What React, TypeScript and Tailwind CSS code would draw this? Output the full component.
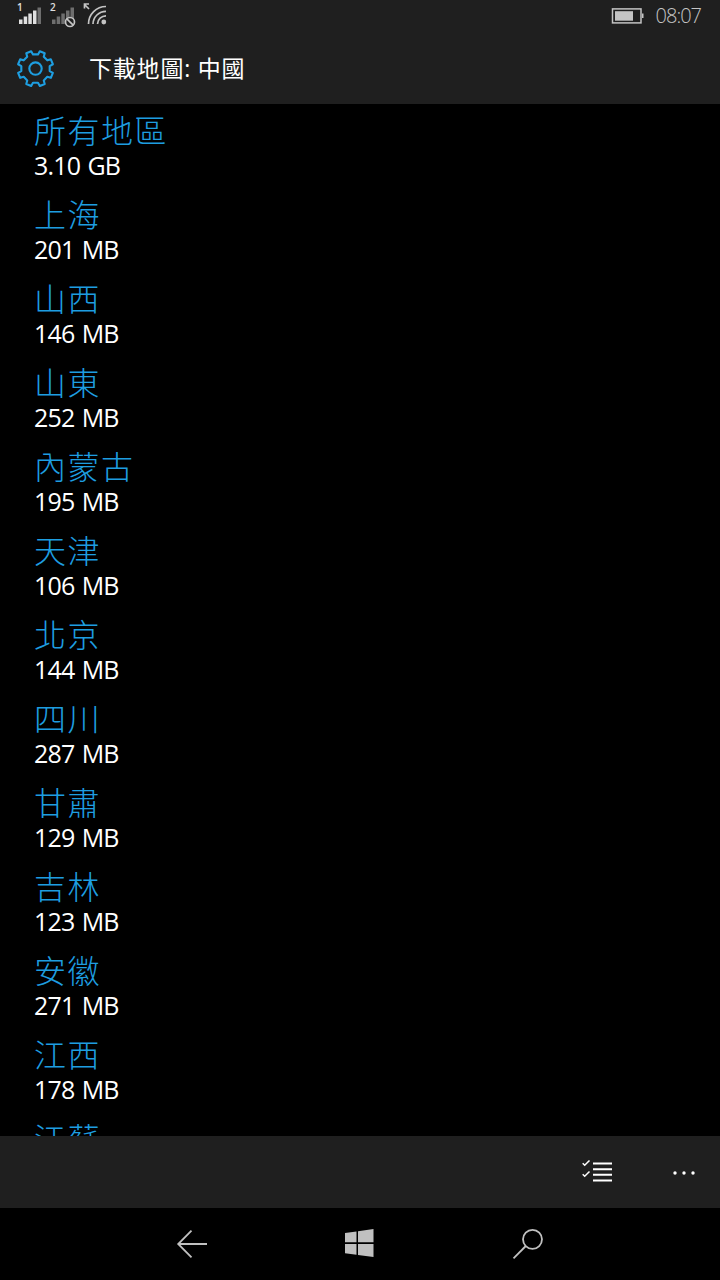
const regions = [
  { name: '所有地區', size: '3.10 GB' },
  { name: '上海', size: '201 MB' },
  { name: '山西', size: '146 MB' },
  { name: '山東', size: '252 MB' },
  { name: '內蒙古', size: '195 MB' },
  { name: '天津', size: '106 MB' },
  { name: '北京', size: '144 MB' },
  { name: '四川', size: '287 MB' },
  { name: '甘肅', size: '129 MB' },
  { name: '吉林', size: '123 MB' },
  { name: '安徽', size: '271 MB' },
  { name: '江西', size: '178 MB' },
  { name: '江蘇', size: '' },
]

// eight teeth, none of them pointing straight up
const gearPoints = () => {
  const pts: string[] = []
  const at = (deg: number, r: number) => {
    const a = (deg * Math.PI) / 180
    pts.push(`${(20.5 + r * Math.sin(a)).toFixed(2)},${(20.6 - r * Math.cos(a)).toFixed(2)}`)
  }
  for (let i = 0; i < 8; i++) {
    const mid = 22.5 + i * 45
    at(mid - 12.5, 14.4)
    at(mid - 8.5, 17.9)
    at(mid + 8.5, 17.9)
    at(mid + 12.5, 14.4)
  }
  return pts.join(' ')
}

function GearIcon() {
  return <svg width="40" height="40" viewBox="0 0 40 40" fill="none" stroke="#1e9ee0" strokeWidth="2.1" strokeLinejoin="round">
    <polygon points={gearPoints()} />
    <circle cx="20.5" cy="20.6" r="6.2" />
  </svg>
}

function SignalIcon({ color, last }: { color: string, last: string }) {
  return <svg width="24" height="18" viewBox="0 0 24 18" fill={color}>
    <rect x="0" y="12.5" width="3.5" height="4.5" />
    <rect x="4.7" y="9.5" width="3.5" height="7.5" />
    <rect x="9.3" y="6.5" width="3.5" height="10.5" />
    <rect x="14" y="3.5" width="3.5" height="13.5" />
    <rect x="18.5" y="0.5" width="3.5" height="16.5" fill={last} />
  </svg>
}

function StatusBar() {
  return <div className="flex h-8 items-start justify-between text-[#c4c4c4]">
    <div className="flex">
      <div className="flex pl-[17px]">
        <span className="w-[2px] pt-[2px] text-[10px] leading-[10px] font-semibold text-[#e0e0e0]">1</span>
        <div className="pt-[7px]"><SignalIcon color="#e0e0e0" last="#6e6e6e" /></div>
      </div>
      <div className="flex pl-[7px]">
        <span className="w-[2px] pt-[2px] text-[10px] leading-[10px] font-semibold text-[#e0e0e0]">2</span>
        <div className="relative pt-[7px]">
          <SignalIcon color="#6e6e6e" last="#6e6e6e" />
          <svg className="absolute top-[16px] left-[12px]" width="12" height="12" viewBox="0 0 12 12" fill="#1f1f1f" stroke="#c4c4c4" strokeWidth="1.7">
            <circle cx="6" cy="6" r="4.5" />
            <path d="M2.8 2.8l6.4 6.4" />
          </svg>
        </div>
      </div>
      <svg className="ml-[7px]" width="28" height="28" viewBox="0 0 28 28" fill="none" stroke="#c4c4c4" strokeWidth="1.7">
        <path d="M1.5 8.500V4h4.500M1.500 4.500l4.500 4.500" />
        <path d="M5.500 24A17.500 17.500 0 0 1 23 6.500M10 24A13 13 0 0 1 23 11.300M14.500 24A8.500 8.500 0 0 1 23 15.800" />
        <circle cx="20.800" cy="22" r="2.400" fill="#c4c4c4" stroke="none" />
      </svg>
    </div>
    <div className="flex pr-[19px]">
      <svg className="mt-[8px] mr-[12px]" width="33" height="16" viewBox="0 0 33 16">
        <rect x="1.500" y="0.9" width="28.500" height="14" fill="none" stroke="#c4c4c4" strokeWidth="1.500" />
        <rect x="4" y="3.2" width="18" height="9.500" fill="#c4c4c4" />
        <rect x="31" y="5.500" width="1.500" height="4.500" fill="#c4c4c4" />
      </svg>
      <span className="pt-[3px] text-[20px] leading-[26px] font-light tracking-[-1px]">08:07</span>
    </div>
  </div>
}

function ListIcon() {
  return <svg width="32" height="24" viewBox="0 0 32 24" fill="none" stroke="#fff" strokeWidth="2">
    <path d="M11 3.500h19M11 9.300h19M11 14.700h19M11 20.500h19" />
    <path d="M0.700 3.300l2 2 4.800-4.800M0.700 14.300l2 2 4.800-4.800" strokeWidth="1.500" />
  </svg>
}

export default function App() {
  return (
    <div className="flex h-[1280px] w-[720px] flex-col overflow-hidden bg-black font-['Open_Sans','Noto_Sans_CJK_TC',sans-serif] text-white">
      <header className="h-[104px] shrink-0 bg-[#1f1f1f]">
        <StatusBar />
        <div className="flex h-[72px] items-center pl-[15px]">
          <GearIcon />
          <h1 className="pl-[34px] text-[23px] leading-[30px] font-normal tracking-[0.8px]">下載地圖: 中國</h1>
        </div>
      </header>

      <ul className="min-h-0 flex-1 overflow-hidden pt-[7px] pl-[34px]">
        {regions.map(r => <li key={r.name} className="h-[84px]">
          <div className="h-[39px] text-[32px] leading-[40px] font-light tracking-[1.5px] text-[#1e9ee0]">{r.name}</div>
          <div className="h-[30px] text-[25px] leading-[30px] tracking-[-0.8px] [word-spacing:1.5px]">{r.size}</div>
        </li>)}
      </ul>

      <div className="flex h-[72px] shrink-0 items-center justify-end bg-[#1f1f1f] pr-[24px]">
        <button><ListIcon /></button>
        <button className="pl-[58px]">
          <svg width="24" height="6" viewBox="0 0 24 6" fill="#fff">
            <circle cx="3" cy="4" r="1.700" />
            <circle cx="12" cy="4" r="1.700" />
            <circle cx="21" cy="4" r="1.700" />
          </svg>
        </button>
      </div>

      <nav className="flex h-[72px] shrink-0 items-center pl-[176px]">
        <svg width="32" height="32" viewBox="0 0 32 32" fill="none" stroke="#c0c0c0" strokeWidth="1.800">
          <path d="M31 16H2M15.500 2.700L2.200 16l13.300 13.300" />
        </svg>
        <svg className="ml-[136px]" width="32" height="32" viewBox="0 0 32 32" fill="#c0c0c0">
          <path d="M1 5l11.500-1.600v10.800H1zM14 3.200L29.500 1v13.200H14zM1 15.900h11.500v10.900L1 25.200zM14 15.900h15.500v13.100L14 27z" />
        </svg>
        <svg className="ml-[136px]" width="32" height="32" viewBox="0 0 32 32" fill="none" stroke="#c0c0c0" strokeWidth="1.800">
          <circle cx="20.500" cy="11.300" r="9.500" />
          <path d="M13.800 18L1.500 30.300" />
        </svg>
      </nav>
    </div>
  )
}
